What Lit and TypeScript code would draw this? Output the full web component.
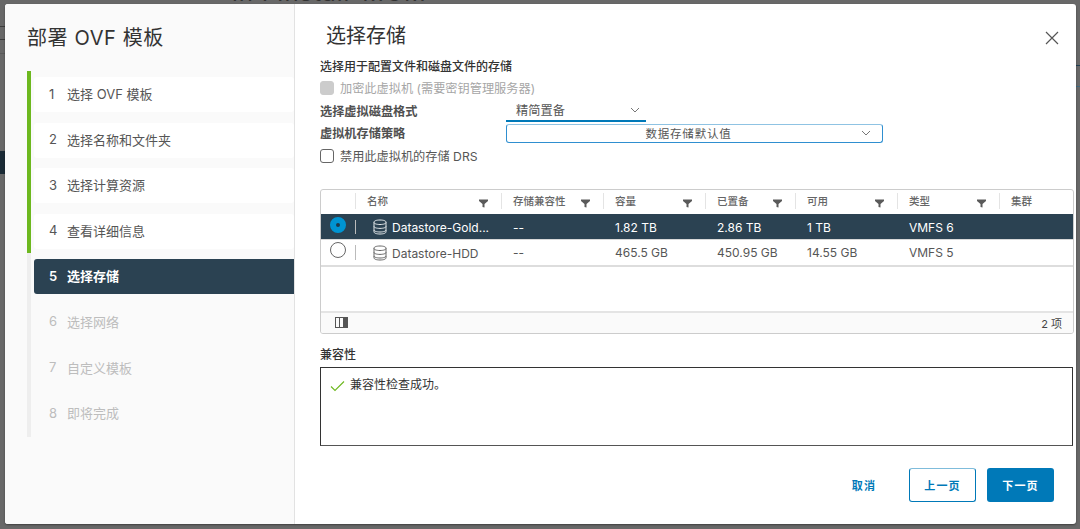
import { LitElement, html, css, svg } from "lit";
import { customElement } from "lit/decorators.js";

const STEPS = [
  ["1", "选择 OVF 模板", "done"],
  ["2", "选择名称和文件夹", "done"],
  ["3", "选择计算资源", "done"],
  ["4", "查看详细信息", "done"],
  ["5", "选择存储", "active"],
  ["6", "选择网络", "todo"],
  ["7", "自定义模板", "todo"],
  ["8", "即将完成", "todo"],
];

const COLS = [
  { t: "", w: 35, f: false },
  { t: "名称", w: 146, f: true },
  { t: "存储兼容性", w: 102, f: true },
  { t: "容量", w: 102, f: true },
  { t: "已置备", w: 90, f: true },
  { t: "可用", w: 102, f: true },
  { t: "类型", w: 102, f: true },
  { t: "集群", w: 73, f: false },
];

const ROWS = [
  { sel: true, name: "Datastore-Gold...", vals: ["--", "1.82 TB", "2.86 TB", "1 TB", "VMFS 6", ""] },
  { sel: false, name: "Datastore-HDD", vals: ["--", "465.5 GB", "450.95 GB", "14.55 GB", "VMFS 5", ""] },
];

const filterIcon = svg`<svg class="filter" width="9" height="9" viewBox="0 0 9 9"><path d="M0 .5h9v1.6L5.5 5v3.6L3.5 8V5L0 2.1z" fill="currentColor"/></svg>`;
const chevron = svg`<svg class="chev" width="10" height="6" viewBox="0 0 10 6"><path d="M1 1l4 4 4-4" fill="none" stroke="currentColor" stroke-width="1"/></svg>`;
const dbIcon = svg`<svg class="db" width="14" height="16" viewBox="0 0 14 16" fill="none" stroke="currentColor" stroke-width="1"><path d="M1 3.2C1 1.8 3.6 1 7 1s6 .8 6 2.2v9.6c0 1.4-2.6 2.2-6 2.2s-6-.8-6-2.2z"/><path d="M1 3.4c0 1.3 2.6 2.1 6 2.1s6-.8 6-2.1M1 7.4c0 1.2 2.6 2 6 2s6-.8 6-2M1 11c0 1.2 2.6 2 6 2s6-.8 6-2"/></svg>`;

@customElement("app-root")
export class AppRoot extends LitElement {
  static styles = css`
    :host {
      display: block;
      width: 1080px;
      height: 529px;
      overflow: hidden;
      background: #686868;
      font-family: Inter, "Noto Sans CJK SC", sans-serif;
      color: #565656;
      position: relative;
    }
    .under { position: absolute; }
    .under-title {
      left: 232px;
      top: -21px;
      font-size: 24px;
      line-height: 28px;
      color: #333;
      white-space: nowrap;
      letter-spacing: 1px;
    }
    .under-menu {
      left: 0;
      top: 26px;
      width: 5px;
      height: 12px;
      border-top: 1px solid #3c3c3c;
      border-bottom: 1px solid #3c3c3c;
    }
    .under-rule {
      left: 0;
      top: 53px;
      width: 5px;
      height: 1px;
      background: #5a5a5a;
    }
    .under-dark {
      left: 0;
      top: 151px;
      width: 5px;
      height: 23px;
      background: #1b2b36;
    }
    .under-blue {
      right: 0;
      top: 65px;
      width: 4px;
      height: 22px;
      border-top: 1px solid #1f3f52;
      border-bottom: 1px solid #3f6a80;
      box-sizing: border-box;
    }
    .backdrop {
      height: 100%;
      padding: 4px 4px 5px 5px;
      box-sizing: border-box;
      position: relative;
    }
    .dialog {
      display: flex;
      height: 100%;
      background: #fff;
      border-radius: 3px;
      box-shadow: 0 1px 2px rgba(0, 0, 0, 0.4);
      overflow: hidden;
    }
    .side {
      width: 290px;
      flex: none;
      box-sizing: border-box;
      background: #fafafa;
      border-right: 1px solid #e2e2e2;
      padding: 21px 0 0 22px;
    }
    .side h1 {
      margin: 0 0 19px 0;
      font-size: 20px;
      line-height: 27px;
      font-weight: 400;
      color: #333;
      letter-spacing: 0.6px;
      white-space: nowrap;
    }
    .steps {
      box-sizing: border-box;
      border-left: 4px solid #eeeeee;
      height: 366px;
      position: relative;
      padding-top: 6px;
      display: flex;
      flex-direction: column;
      gap: 10.6px;
    }
    .progress {
      position: absolute;
      left: -4px;
      top: 0;
      width: 4px;
      height: 182px;
      background: #6db81f;
    }
    .step {
      display: flex;
      align-items: center;
      box-sizing: border-box;
      height: 35px;
      flex: none;
      margin-left: 3px;
      padding: 0 0 2px 15px;
      background: #fff;
      border-radius: 3px;
      font-size: 13px;
      color: #565656;
    }
    .step .n { width: 18px; flex: none; }
    .step.active {
      background: #2b4252;
      color: #fff;
      font-weight: 600;
      border-radius: 3px 0 0 3px;
    }
    .step.todo {
      background: transparent;
      color: #bdbdbd;
    }
    .main {
      flex: 1;
      min-width: 0;
      display: flex;
      flex-direction: column;
      padding-left: 25px;
      position: relative;
    }
    .main h2 {
      margin: 17px 0 0 6px;
      font-size: 20px;
      line-height: 30px;
      font-weight: 400;
      color: #333;
    }
    .close {
      position: absolute;
      right: 17px;
      top: 27px;
      width: 14px;
      height: 14px;
      color: #565656;
    }
    .hint {
      margin-top: 8px;
      margin-bottom: 1.6px;
      font-size: 12px;
      line-height: 16px;
      font-weight: 500;
      color: #333;
    }
    .line {
      display: flex;
      align-items: center;
      font-size: 12.2px;
      height: 22.7px;
    }
    .check {
      width: 14px;
      height: 14px;
      box-sizing: border-box;
      border: 1px solid #666;
      border-radius: 3px;
      margin-right: 6px;
      flex: none;
      background: #fff;
    }
    .check.off {
      background: #ccc;
      border-color: #ccc;
    }
    .dim { color: #a6a6a6; }
    .lbl {
      width: 186px;
      flex: none;
      font-weight: 600;
      color: #505050;
    }
    .sel1 {
      width: 140px;
      height: 22px;
      box-sizing: border-box;
      border-bottom: 2px solid #0079b8;
      display: flex;
      align-items: center;
      justify-content: space-between;
      padding: 0 6px 0 10px;
      letter-spacing: 0.1px;
    }
    .sel2 {
      width: 377px;
      height: 19px;
      box-sizing: border-box;
      border: 1px solid #2f8fd0;
      border-top-color: #8fc3e3;
      border-radius: 3px;
      display: flex;
      align-items: center;
      padding: 0 11px 0 0;
      letter-spacing: 0.8px;
      font-size: 11.5px;
    }
    .sel2 span {
      flex: 1;
      text-align: center;
      padding-left: 9px;
    }
    .chev { color: #777; }
    .grid {
      margin-top: 21.6px;
      width: 754px;
      height: 145px;
      box-sizing: border-box;
      border: 1px solid #ccc;
      border-radius: 3px;
      display: flex;
      flex-direction: column;
      font-size: 12px;
      overflow: hidden;
    }
    .tr { display: flex; flex: none; }
    .head {
      height: 24px;
      font-size: 10.5px;
      color: #666;
      font-weight: 500;
    }
    .th {
      position: relative;
      box-sizing: border-box;
      padding: 5px 0 0 11px;
      flex: none;
      line-height: 14px;
    }
    .th::after {
      content: "";
      position: absolute;
      right: 0;
      top: 3px;
      height: 16px;
      width: 1px;
      background: #e4e4e4;
    }
    .th:last-child::after { display: none; }
    .filter {
      position: absolute;
      right: 14px;
      top: 9px;
      color: #5a5a5a;
    }
    .row {
      height: 25.5px;
      align-items: center;
      border-top: 1px solid #d8d8d8;
      box-sizing: border-box;
    }
    .row.sel {
      background: #2b4252;
      color: #fff;
      border-top-color: #2b4252;
    }
    .td {
      flex: none;
      box-sizing: border-box;
      padding-left: 11px;
      white-space: nowrap;
    }
    .tdsel {
      height: 100%;
      display: flex;
      align-items: center;
      padding-left: 9px;
      position: relative;
    }
    .tdsel::after {
      content: "";
      position: absolute;
      right: 0;
      top: 5px;
      bottom: 5px;
      width: 1px;
      background: #bbb;
    }
    .radio {
      width: 16px;
      height: 16px;
      box-sizing: border-box;
      border: 1px solid #666;
      border-radius: 50%;
      background: #fff;
      margin-top: -5px;
    }
    .radio.on {
      border: 6px solid #0094d2;
      background: #1c3a4c;
    }
    .tdname {
      display: flex;
      align-items: center;
      gap: 5px;
      padding-left: 17px;
    }
    .tdname span { padding-top: 1px; }
    .db { color: #666; }
    .sel .db { color: #e4e8ea; }
    .rowend {
      border-top: 2px solid #ddd;
      height: 46px;
      box-sizing: border-box;
      flex: none;
    }
    .foot {
      flex: 1;
      display: flex;
      align-items: center;
      justify-content: space-between;
      padding: 0 11px 0 14px;
      background: #fafafa;
      border-top: 2px solid #e4e4e4;
      font-size: 11px;
      color: #444;
    }
    .compat-label {
      margin-top: 12px;
      font-size: 12px;
      line-height: 18px;
      font-weight: 500;
      color: #333;
    }
    .compat {
      margin-top: 3px;
      width: 753px;
      height: 79px;
      box-sizing: border-box;
      border: 1px solid #333;
      border-bottom-color: #555;
      padding: 9px 9px;
      display: flex;
      align-items: flex-start;
      gap: 5px;
      font-size: 12px;
      line-height: 16px;
      color: #333;
    }
    .compat svg { margin-top: 3px; flex: none; }
    .actions {
      margin-top: 22px;
      width: 734px;
      display: flex;
      justify-content: flex-end;
      align-items: center;
      gap: 11px;
    }
    .btn {
      height: 34px;
      width: 67px;
      box-sizing: border-box;
      border-radius: 3px;
      display: flex;
      align-items: center;
      justify-content: center;
      font-size: 11px;
      font-weight: 600;
      letter-spacing: 1.2px;
      color: #0079b8;
    }
    .btn.flat { width: 42px; margin-right: 13px; }
    .btn.out { border: 1px solid #0079b8; border-top-color: #7fbcdb; }
    .btn.pri { background: #0079b8; color: #fff; }
  `;

  render() {
    return html`
      <div class="under under-title">in I Install-MGM</div>
      <div class="under under-menu"></div>
      <div class="under under-rule"></div>
      <div class="under under-dark"></div>
      <div class="under under-blue"></div>
      <div class="backdrop">
      <div class="dialog">
        <aside class="side">
          <h1>部署 OVF 模板</h1>
          <div class="steps">
            <div class="progress"></div>
            ${STEPS.map(
              ([n, t, s]) => html`<div class="step ${s}"><span class="n">${n}</span><span>${t}</span></div>`
            )}
          </div>
        </aside>
        <section class="main">
          <h2>选择存储</h2>
          <svg class="close" viewBox="0 0 14 14"><path d="M1 1l12 12M13 1L1 13" stroke="currentColor" stroke-width="1.2" fill="none"/></svg>
          <div class="hint">选择用于配置文件和磁盘文件的存储</div>
          <div class="line"><span class="check off"></span><span class="dim">加密此虚拟机 (需要密钥管理服务器)</span></div>
          <div class="line"><span class="lbl">选择虚拟磁盘格式</span><div class="sel1"><span>精简置备</span>${chevron}</div></div>
          <div class="line"><span class="lbl">虚拟机存储策略</span><div class="sel2"><span>数据存储默认值</span>${chevron}</div></div>
          <div class="line"><span class="check"></span><span>禁用此虚拟机的存储 DRS</span></div>
          <div class="grid">
            <div class="tr head">
              ${COLS.map(
                (c) => html`<div class="th" style="width:${c.w}px">${c.t}${c.f ? filterIcon : ""}</div>`
              )}
            </div>
            ${ROWS.map(
              (r) => html`<div class="tr row ${r.sel ? "sel" : ""}">
                <div class="td tdsel" style="width:${COLS[0].w}px"><span class="radio ${r.sel ? "on" : ""}"></span></div>
                <div class="td tdname" style="width:${COLS[1].w}px">${dbIcon}<span>${r.name}</span></div>
                ${r.vals.map((v, i) => html`<div class="td" style="width:${COLS[i + 2].w}px">${v}</div>`)}
              </div>`
            )}
            <div class="rowend"></div>
            <div class="foot">
              <svg width="13" height="11" viewBox="0 0 13 11"><rect x=".5" y=".5" width="12" height="10" fill="none" stroke="#555"/><rect x="8" y="1" width="4" height="9" fill="#555"/><path d="M4.5 1v9" stroke="#555"/></svg>
              <span>2 项</span>
            </div>
          </div>
          <div class="compat-label">兼容性</div>
          <div class="compat">
            <svg width="15" height="12" viewBox="0 0 15 12"><path d="M1 6.5l4 4L14 1.5" fill="none" stroke="#6db81f" stroke-width="1.1"/></svg>
            <span>兼容性检查成功。</span>
          </div>
          <div class="actions">
            <div class="btn flat">取消</div>
            <div class="btn out">上一页</div>
            <div class="btn pri">下一页</div>
          </div>
        </section>
      </div>
    </div>`;
  }
}
